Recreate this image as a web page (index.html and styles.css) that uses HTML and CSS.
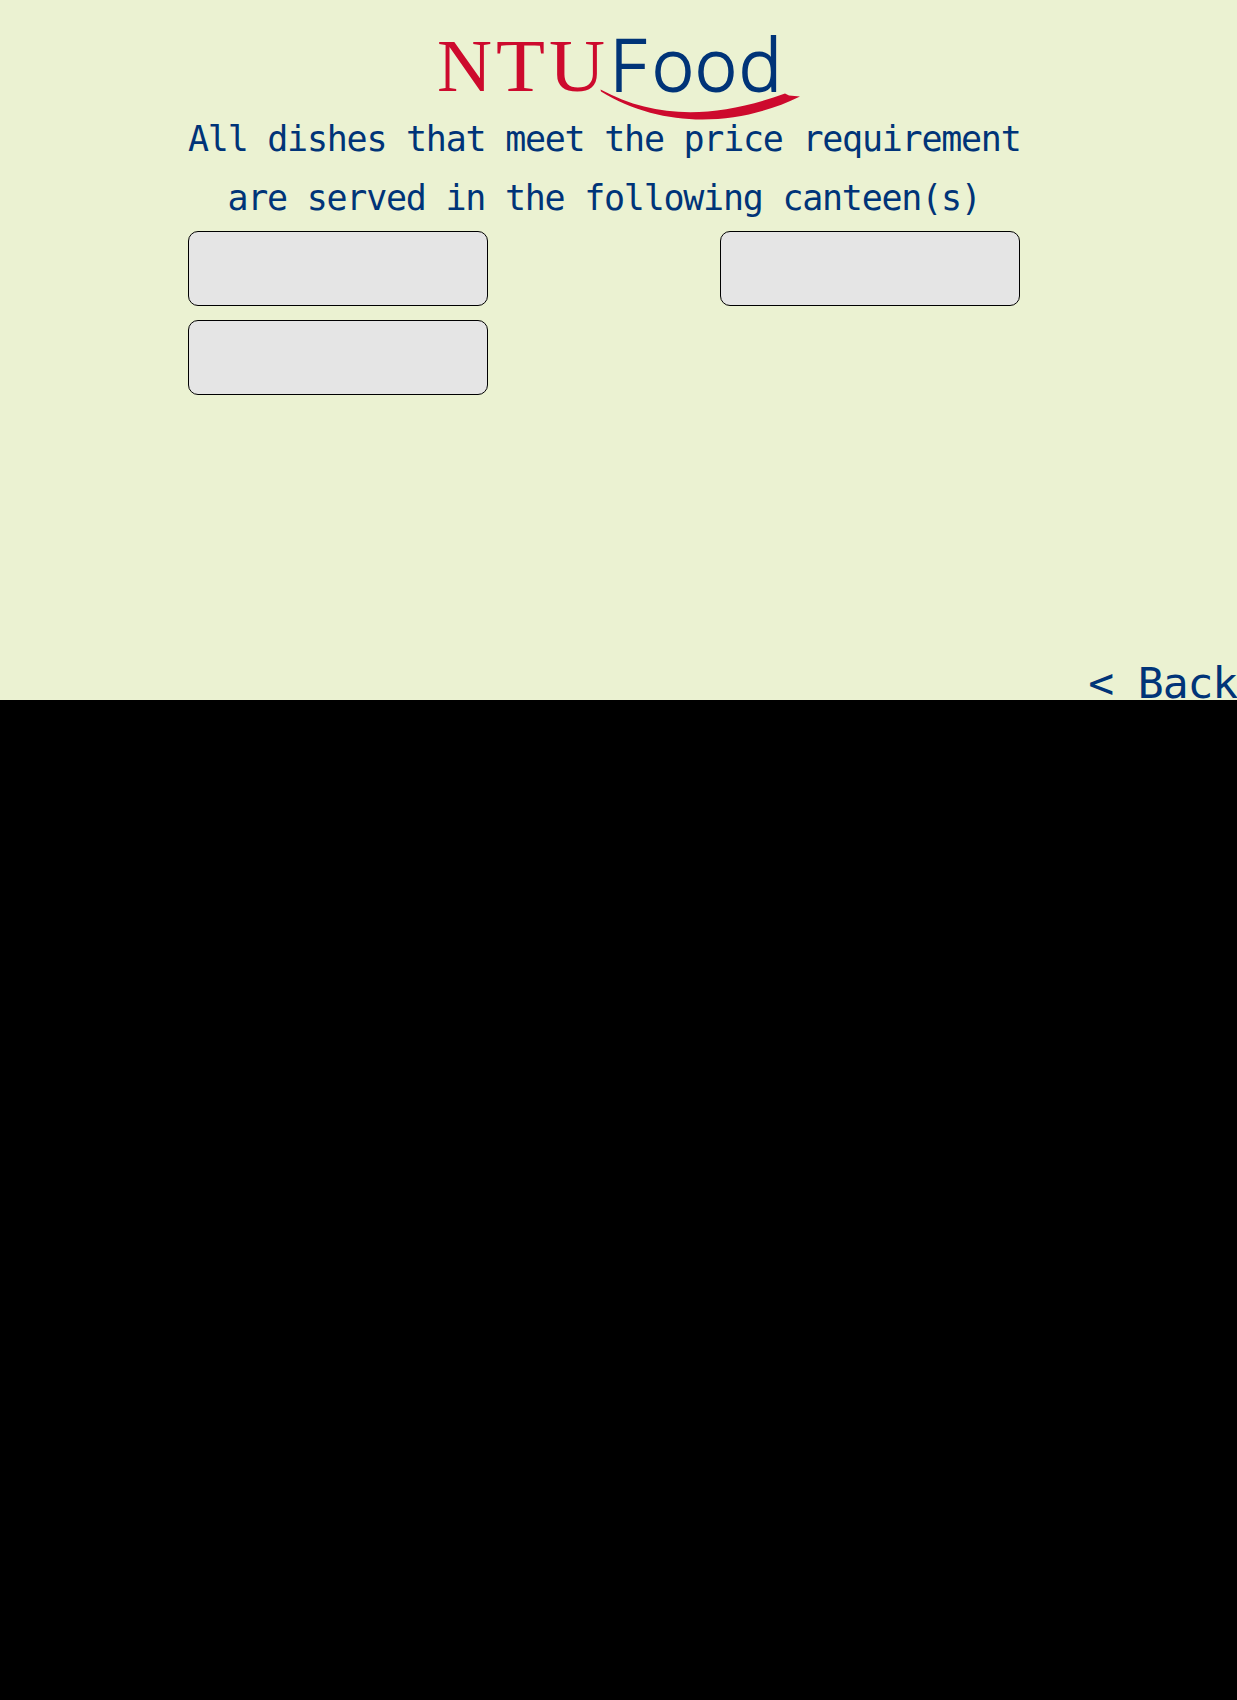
FILE: index.html
```html
<!DOCTYPE html>
<html lang="en">
<head>
<meta charset="utf-8">
<title>NTU Food</title>
<link rel="stylesheet" href="styles.css">
</head>
<body>
<div class="screen">
  <header class="brand">
    <svg class="logo" width="380" height="110" viewBox="430 10 380 110" role="img" aria-label="NTU Food">
      <g class="logo-ntu">
        <text x="437" y="91" textLength="55" lengthAdjust="spacingAndGlyphs">N</text>
        <text x="496" y="91" textLength="49" lengthAdjust="spacingAndGlyphs">T</text>
        <text x="549" y="91" textLength="56" lengthAdjust="spacingAndGlyphs">U</text>
      </g>
      <g class="logo-food">
        <text x="610" y="90.5" textLength="36" lengthAdjust="spacingAndGlyphs">F</text>
        <text x="652" y="91" textLength="42" lengthAdjust="spacingAndGlyphs">o</text>
        <text x="695" y="91" textLength="42" lengthAdjust="spacingAndGlyphs">o</text>
        <text class="logo-d" x="739" y="91" textLength="42.5" lengthAdjust="spacingAndGlyphs">d</text>
      </g>
      <path class="logo-swoosh" d="M600.5 89.5C655 119 715 119 785 93.5L789 95.5L800 96.5C738 127 662 129 601 91.5Z"/>
    </svg>
  </header>
  <main class="content">
    <h1 class="message">All dishes that meet the price requirement<br>are served in the following canteen(s)</h1>
    <div class="canteens">
      <div class="canteen"></div>
      <div class="canteen"></div>
      <div class="canteen"></div>
    </div>
  </main>
  <footer class="footer"><a class="back">&lt; Back</a></footer>
</div>
</body>
</html>
```
FILE: styles.css
```css
html {
  background: #000;
}

body {
  margin: 0;
}

.screen {
  display: flex;
  flex-direction: column;
  height: 700px;
  background: #ebf2d2;
  color: #003478;
  font-family: "DejaVu Sans Mono", monospace;
}

.brand {
  height: 100px;
  padding: 10px 0 0 430px;
}

.logo {
  display: block;
  overflow: visible;
}

.logo-ntu {
  fill: #cd0a2d;
  font: 75px "Liberation Serif", serif;
}

.logo-food {
  fill: #003478;
  stroke: #003478;
  stroke-width: 1.8px;
  font: 300 72px "Open Sans", sans-serif;
}

.logo-d {
  font-size: 71px;
}

.logo-swoosh {
  fill: #cd0a2d;
}

.content {
  width: 832px;
  margin-left: 188px;
}

.message {
  margin: 0 0 3px;
  font-size: 35px;
  font-weight: 400;
  line-height: 59px;
  letter-spacing: -1.25px;
  text-align: center;
  white-space: nowrap;
}

.canteens {
  display: grid;
  grid-template-columns: 300px 300px;
  justify-content: space-between;
  row-gap: 14px;
}

.canteen {
  box-sizing: border-box;
  height: 75px;
  border: 1px solid #000;
  border-radius: 10px;
  background: #e5e5e5;
}

.footer {
  margin-top: auto;
  text-align: right;
}

.back {
  display: block;
  font-size: 43px;
  line-height: 34px;
  letter-spacing: -1.1px;
}
```
